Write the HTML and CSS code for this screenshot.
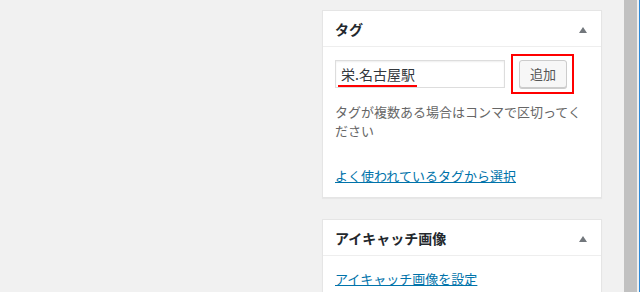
FILE: index.html
```html
<!DOCTYPE html>
<html lang="ja">
<head>
    <meta charset="UTF-8">
    <meta name="viewport" content="width=device-width, initial-scale=1.0">
    <title>タグ</title>
    <link rel="stylesheet" href="styles.css">
</head>
<body>
    <div class="screen">
        <div class="main-area"></div>

        <div class="sidebar">
            <div class="postbox">
                <div class="postbox-header">
                    <h2 class="hndle">タグ</h2>
                    <span class="toggle-arrow"></span>
                </div>
                <div class="inside">
                    <div class="tag-row">
                        <div class="tag-input-wrap">
                            <input class="tag-input" type="text" value="栄.名古屋駅">
                            <span class="mark-line"></span>
                        </div>
                        <div class="mark-box">
                            <button class="button">追加</button>
                        </div>
                    </div>
                    <p class="howto">タグが複数ある場合はコンマで区切ってください</p>
                    <p class="tag-cloud-link"><a href="#">よく使われているタグから選択</a></p>
                </div>
            </div>

            <div class="postbox">
                <div class="postbox-header">
                    <h2 class="hndle">アイキャッチ画像</h2>
                    <span class="toggle-arrow"></span>
                </div>
                <div class="inside">
                    <p class="thumb-link"><a href="#">アイキャッチ画像を設定</a></p>
                </div>
            </div>
        </div>

        <div class="scrollbar"></div>
        <div class="edge"></div>
    </div>
</body>
</html>
```

FILE: styles.css
```css
* {
    box-sizing: border-box;
}

html,
body {
    margin: 0;
    height: 100%;
    overflow: hidden;
}

body {
    background-color: #f1f1f1;
    color: #444;
    font-family: "Noto Sans CJK JP", "Noto Sans", sans-serif;
    font-size: 13px;
}

.screen {
    display: flex;
    height: 100%;
}

.main-area {
    width: 322px;
    flex-shrink: 0;
}

.sidebar {
    width: 280px;
    flex-shrink: 0;
    padding-top: 10px;
}

.postbox {
    background-color: #fff;
    border: 1px solid #e5e5e5;
    box-shadow: 0 1px 1px rgba(0, 0, 0, 0.04);
    margin-bottom: 21px;
}

.postbox-header {
    display: flex;
    align-items: center;
    justify-content: space-between;
    border-bottom: 1px solid #eee;
    padding: 0 14px 0 12px;
    height: 36px;
}

.hndle {
    margin: 0;
    font-size: 14px;
    font-weight: 700;
    line-height: 20px;
    color: #23282d;
}

.toggle-arrow {
    width: 0;
    height: 0;
    border-left: 4px solid transparent;
    border-right: 4px solid transparent;
    border-bottom: 6px solid #72777c;
    margin-top: 2px;
}

.inside {
    padding: 7px 12px 12px;
}

.tag-row {
    display: flex;
    align-items: center;
}

.tag-input-wrap {
    position: relative;
    width: 170px;
}

.tag-input {
    display: block;
    width: 100%;
    height: 28px;
    margin: 0;
    padding: 0 5px;
    border: 1px solid #ddd;
    box-shadow: inset 0 1px 2px rgba(0, 0, 0, 0.07);
    font-family: inherit;
    font-size: 14px;
    color: #32373c;
    background-color: #fff;
}

.mark-line {
    position: absolute;
    left: 3px;
    bottom: 1px;
    width: 79px;
    height: 2px;
    background-color: #f00;
}

.mark-box {
    margin-left: 6px;
    border: 2px solid #f00;
    padding: 4px 5px 4px 6px;
}

.button {
    display: block;
    height: 28px;
    margin: 0;
    padding: 0 10px;
    border: 1px solid #ccc;
    border-radius: 3px;
    background-color: #f7f7f7;
    box-shadow: 0 1px 0 #ccc;
    color: #555;
    font-family: inherit;
    font-size: 13px;
    line-height: 26px;
    cursor: pointer;
}

.howto {
    margin: 8px 0 0;
    color: #666;
    line-height: 19px;
}

.tag-cloud-link {
    margin: 26px 0 0;
    line-height: 19px;
}

.thumb-link {
    margin: 6px 0 0;
    line-height: 19px;
}

a {
    color: #0073aa;
    text-decoration: underline;
}

.scrollbar {
    margin-left: 22px;
    width: 13px;
    flex-shrink: 0;
    background-color: #c1c1c1;
}

.edge {
    margin-left: 2px;
    width: 1px;
    flex-shrink: 0;
    background-color: #2e8ad8;
}
```
